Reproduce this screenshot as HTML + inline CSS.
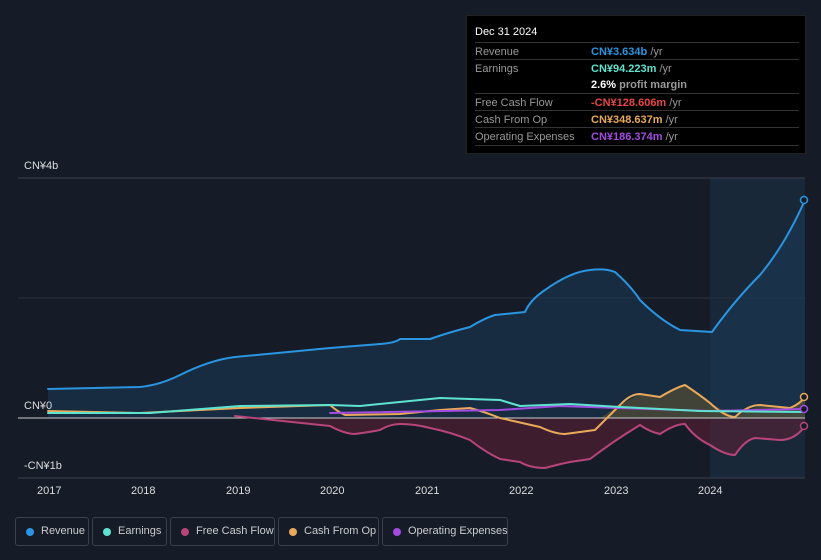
<!DOCTYPE html><html><head><style>
body{margin:0;width:821px;height:560px;background:#151b27;font-family:"Liberation Sans",sans-serif;overflow:hidden;position:relative}
.tt{position:absolute;left:466px;top:15px;width:340px;height:139px;background:#000;border:1px solid #222;box-sizing:border-box;font-size:11px}
.tt .h{color:#fff;font-size:11px;position:absolute;left:8px;top:10px}
.row{position:absolute;left:8px;right:6px;height:17px;border-top:1px solid #333;color:#999}
.row span{position:absolute;left:116px;top:3px}
.row b{font-weight:bold}
.row i{font-style:normal;color:#999}
.lbl{position:absolute;left:0;right:0;top:3px}
.leg{position:absolute;top:517px;height:29px;border:1px solid #3a404c;border-radius:3px;box-sizing:border-box;color:#ccc;font-size:11px;line-height:27px;padding-left:25px;white-space:nowrap}
.leg:before{content:"";position:absolute;left:10px;top:10px;width:8px;height:8px;border-radius:50%;background:var(--c)}
.ax{position:absolute;color:#ddd;font-size:11px}
</style></head><body>
<svg width="821" height="560" style="position:absolute;left:0;top:0">
<rect x="710" y="178" width="95" height="300" fill="#1a2d42" opacity="0.7"/>
<line x1="18" y1="178" x2="805" y2="178" stroke="#3a404c"/>
<line x1="18" y1="298" x2="805" y2="298" stroke="#2a303c"/>
<line x1="18" y1="478" x2="805" y2="478" stroke="#3a404c"/>
<path d="M48,389 L140,387 Q160,385 180,375 Q210,360 235,357 L330,348 L380,344 Q395,343 400,339 L430,339 Q450,332 470,327 Q485,318 495,315 L525,312 Q530,300 545,290 Q570,272 590,270 Q605,268 615,272 Q630,285 640,300 Q660,320 680,330 L712,332 Q735,300 760,275 Q785,245 805,200 L805,418 L48,418Z" fill="#1b3a57" opacity="0.55"/>
<path d="M235,416 L330,426 Q345,434 355,434 Q370,432 380,430 Q390,424 400,424 Q415,424 430,428 Q450,432 470,440 Q485,452 500,459 L520,462 Q530,468 545,468 Q560,464 570,462 L590,459 Q615,440 640,425 Q650,432 660,434 Q675,424 685,424 Q695,438 710,445 Q725,455 735,455 Q745,440 755,438 L780,440 Q795,440 805,426 L805,418 L235,418Z" fill="#5a2035" opacity="0.6"/>
<path d="M600,418 L620,405 L640,394 L660,397 L685,385 L710,403 L735,417 L760,405 L790,408 L805,397 L805,418Z" fill="#6a5a30" opacity="0.5"/>
<line x1="18" y1="418" x2="805" y2="418" stroke="#ccc" stroke-width="1"/>
<g fill="none" stroke-width="2" stroke-linejoin="round" stroke-linecap="round">
<path stroke="#e8a95a" d="M48,411 L140,413 L240,408 L330,405 Q338,412 345,415 L400,414 L440,410 L470,408 Q485,412 500,418 L540,427 Q555,434 565,434 L595,430 Q610,415 620,405 Q630,394 640,394 L660,397 Q675,388 685,385 Q700,395 710,403 Q725,417 735,417 Q748,405 760,405 L790,408 Q800,404 805,397"/>
<path stroke="#b8457a" d="M235,416 L330,426 Q345,434 355,434 Q370,432 380,430 Q390,424 400,424 Q415,424 430,428 Q450,432 470,440 Q485,452 500,459 L520,462 Q530,468 545,468 Q560,464 570,462 L590,459 Q615,440 640,425 Q650,432 660,434 Q675,424 685,424 Q695,438 710,445 Q725,455 735,455 Q745,440 755,438 L780,440 Q795,440 805,426"/>
<path stroke="#a34be0" d="M330,413 L500,410 L560,406 L620,408 L710,411 L805,409"/>
<path stroke="#5ee3cf" d="M48,413 L150,413 L240,406 L330,405 L360,406 L440,398 L470,399 L500,400 L520,406 L570,404 L620,407 L700,411 L805,412"/>
<path stroke="#2a95e0" d="M48,389 L140,387 Q160,385 180,375 Q210,360 235,357 L330,348 L380,344 Q395,343 400,339 L430,339 Q450,332 470,327 Q485,318 495,315 L525,312 Q530,300 545,290 Q570,272 590,270 Q605,268 615,272 Q630,285 640,300 Q660,320 680,330 L712,332 Q735,300 760,275 Q785,245 805,200"/>
</g>
<circle cx="804" cy="200" r="3.5" fill="#151b27" stroke="#2a95e0" stroke-width="1.5"/>
<circle cx="804" cy="426" r="3.5" fill="#151b27" stroke="#b8457a" stroke-width="1.5"/>
<circle cx="804" cy="397" r="3.5" fill="#151b27" stroke="#e8a95a" stroke-width="1.5"/>
<circle cx="804" cy="409" r="3.5" fill="#151b27" stroke="#a34be0" stroke-width="1.5"/>
</svg>
<div class="ax" style="left:24px;top:160px">CN¥4b</div>
<div class="ax" style="left:24px;top:400px">CN¥0</div>
<div class="ax" style="left:24px;top:460px">-CN¥1b</div>
<div class="ax" style="left:37px;top:485px">2017</div><div class="ax" style="left:131px;top:485px">2018</div><div class="ax" style="left:226px;top:485px">2019</div><div class="ax" style="left:320px;top:485px">2020</div><div class="ax" style="left:415px;top:485px">2021</div><div class="ax" style="left:509px;top:485px">2022</div><div class="ax" style="left:604px;top:485px">2023</div><div class="ax" style="left:698px;top:485px">2024</div>
<div class="tt"><div class="h">Dec 31 2024</div>
<div class="row" style="top:26px"><div class="lbl">Revenue</div><span><b style="color:#2a95e0">CN¥3.634b</b> <i>/yr</i></span></div>
<div class="row" style="top:43px"><div class="lbl">Earnings</div><span><b style="color:#5ee3cf">CN¥94.223m</b> <i>/yr</i></span></div>
<div class="row" style="top:60px;border-top:none"><span><b style="color:#fff">2.6%</b> <i style="font-weight:bold">profit margin</i></span></div>
<div class="row" style="top:77px"><div class="lbl">Free Cash Flow</div><span><b style="color:#e84545">-CN¥128.606m</b> <i>/yr</i></span></div>
<div class="row" style="top:94px"><div class="lbl">Cash From Op</div><span><b style="color:#e8a95a">CN¥348.637m</b> <i>/yr</i></span></div>
<div class="row" style="top:111px;border-bottom:1px solid #333"><div class="lbl">Operating Expenses</div><span><b style="color:#a34be0">CN¥186.374m</b> <i>/yr</i></span></div>
</div>
<div class="leg" style="left:15px;width:74px;--c:#2a95e0">Revenue</div>
<div class="leg" style="left:92px;width:75px;--c:#5ee3cf">Earnings</div>
<div class="leg" style="left:170px;width:105px;--c:#b8457a">Free Cash Flow</div>
<div class="leg" style="left:278px;width:101px;--c:#e8a95a">Cash From Op</div>
<div class="leg" style="left:382px;width:126px;--c:#a34be0">Operating Expenses</div>
</body></html>
